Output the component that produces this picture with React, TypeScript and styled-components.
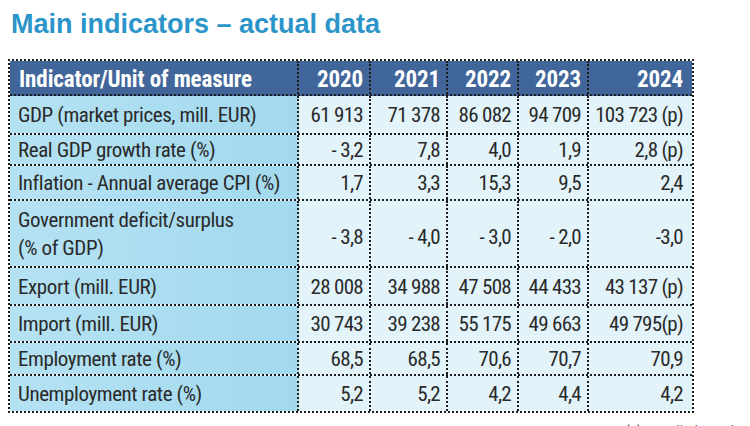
import styled, { createGlobalStyle } from 'styled-components';

const GlobalStyle = createGlobalStyle`
  html, body {
    margin: 0;
    padding: 0;
    background: #ffffff;
  }
  body {
    font-family: "Liberation Sans", Arial, sans-serif;
  }
`;

const NARROW = `"Roboto Condensed", "Liberation Sans Narrow", "Arial Narrow", "Liberation Sans", sans-serif`;
const COLUMNS = '289px 72px 77px 71px 70px 103px';
const DOTS = '2px dotted #1d1d1d';

interface IRow {
  label: string[];
  values: string[];
  height: number;
}

const years = ['2020', '2021', '2022', '2023', '2024'];

const rows: IRow[] = [
  { label: ['GDP (market prices, mill. EUR)'], values: ['61 913', '71 378', '86 082', '94 709', '103 723 (p)'], height: 39 },
  { label: ['Real GDP growth rate (%)'], values: ['- 3,2', '7,8', '4,0', '1,9', '2,8 (p)'], height: 31 },
  { label: ['Inflation - Annual average CPI (%)'], values: ['1,7', '3,3', '15,3', '9,5', '2,4'], height: 35 },
  { label: ['Government deficit/surplus', '(% of GDP)'], values: ['- 3,8', '- 4,0', '- 3,0', '- 2,0', '-3,0'], height: 67 },
  { label: ['Export (mill. EUR)'], values: ['28 008', '34 988', '47 508', '44 433', '43 137 (p)'], height: 38 },
  { label: ['Import (mill. EUR)'], values: ['30 743', '39 238', '55 175', '49 663', '49 795(p)'], height: 37 },
  { label: ['Employment rate (%)'], values: ['68,5', '68,5', '70,6', '70,7', '70,9'], height: 33 },
  { label: ['Unemployment rate (%)'], values: ['5,2', '5,2', '4,2', '4,4', '4,2'], height: 35 },
];

const App = () => {
  return (
    <>
      <GlobalStyle />
      <Page>
        <Title>Main indicators – actual data</Title>
        <Table>
          <HeadRow>
            <HeadCell $label>Indicator/Unit of measure</HeadCell>
            {years.map((year, i) => (
              <HeadCell key={year} $last={i === years.length - 1}>
                {year}
              </HeadCell>
            ))}
          </HeadRow>
          {rows.map((row, r) => (
            <Row key={row.label[0]} $height={row.height} $last={r === rows.length - 1}>
              <LabelCell>
                {row.label.map((line) => (
                  <span key={line}>{line}</span>
                ))}
              </LabelCell>
              {row.values.map((value, i) => (
                <ValueCell key={i} $last={i === row.values.length - 1} $shift={row.label.length > 1}>
                  {value}
                </ValueCell>
              ))}
            </Row>
          ))}
        </Table>
        <Note>(p) – preliminary data</Note>
      </Page>
    </>
  );
};

const Page = styled.div`
  display: flex;
  flex-direction: column;
  padding: 7px 0 0 8px;
  width: 750px;
  height: 426px;
  box-sizing: border-box;
  overflow: hidden;
`;

const Title = styled.h1`
  margin: 0 0 18px;
  padding-left: 3px;
  font-family: "Liberation Sans", Arial, sans-serif;
  font-weight: 700;
  font-size: 27px;
  line-height: 34px;
  color: #2b95c9;
`;

const Table = styled.div`
  display: flex;
  flex-direction: column;
  width: 686px;
  box-sizing: border-box;
  border: ${DOTS};
  background: #ffffff;
  font-family: ${NARROW};
`;

const HeadRow = styled.div`
  display: grid;
  grid-template-columns: ${COLUMNS};
  height: 35px;
  box-sizing: border-box;
  border-bottom: ${DOTS};
  background: #40669a;
`;

const HeadCell = styled.div<{ $label?: boolean; $last?: boolean }>`
  display: flex;
  align-items: center;
  justify-content: ${({ $label }) => ($label ? 'flex-start' : 'flex-end')};
  box-sizing: border-box;
  padding: 3px ${({ $last }) => ($last ? '9px' : '6px')} 0 ${({ $label }) => ($label ? '9px' : '0')};
  border-right: ${({ $last }) => ($last ? 'none' : DOTS)};
  font-weight: 700;
  font-size: 23px;
  letter-spacing: -0.1px;
  color: #ffffff;
  white-space: nowrap;
`;

const Row = styled.div<{ $height: number; $last?: boolean }>`
  display: grid;
  grid-template-columns: ${COLUMNS};
  height: ${({ $height }) => $height}px;
  box-sizing: border-box;
  border-bottom: ${({ $last }) => ($last ? 'none' : DOTS)};
  background: #e2f3fa;
`;

const LabelCell = styled.div`
  display: flex;
  flex-direction: column;
  justify-content: center;
  box-sizing: border-box;
  padding: 1px 0 0 8px;
  border-right: ${DOTS};
  background: linear-gradient(to right, #b5e2f3, #a2d9ee);
  font-size: 21px;
  line-height: 28px;
  letter-spacing: -0.4px;
  color: #2a2a2a;
  white-space: nowrap;
`;

const ValueCell = styled.div<{ $last?: boolean; $shift?: boolean }>`
  display: flex;
  align-items: center;
  justify-content: flex-end;
  box-sizing: border-box;
  padding: ${({ $shift }) => ($shift ? '7px' : '1px')} ${({ $last }) => ($last ? '9px' : '6px')} 0 0;
  border-right: ${({ $last }) => ($last ? 'none' : DOTS)};
  font-size: 21px;
  letter-spacing: -0.7px;
  color: #2a2a2a;
  white-space: nowrap;
`;

const Note = styled.div`
  margin: 9px 0 0 617px;
  font-family: ${NARROW};
  font-size: 15px;
  line-height: 18px;
  color: #555555;
  white-space: nowrap;
`;

export default App;
